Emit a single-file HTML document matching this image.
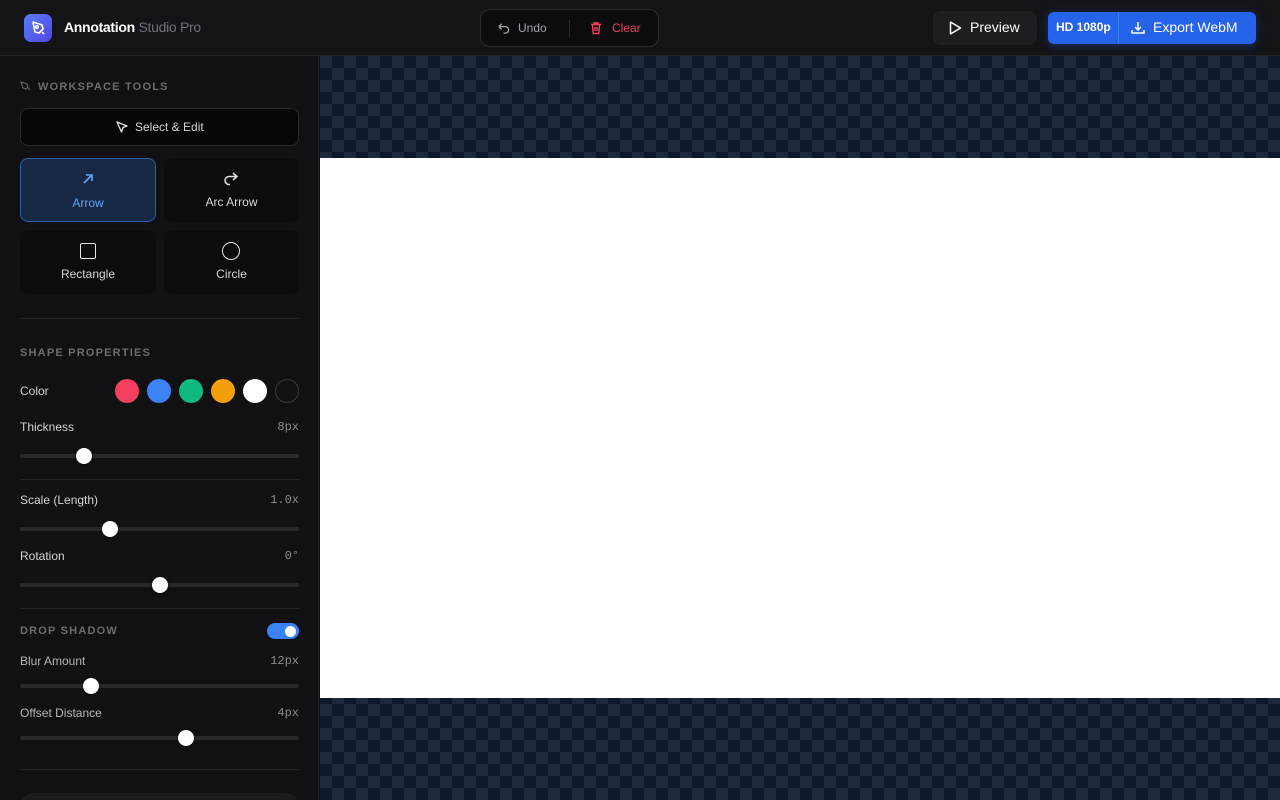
<!DOCTYPE html>
<html style="width:1280px;height:800px;overflow:hidden"><head><style>
*{box-sizing:border-box;margin:0;padding:0}
body{width:1280px;height:800px;overflow:hidden;background:#111113;font-family:"Liberation Sans",sans-serif;color:#e4e4e7;position:relative}
.hdr{position:absolute;left:0;top:0;width:1280px;height:56px;background:#141418;border-bottom:1px solid #242428}
.logo{position:absolute;left:24px;top:14px;width:28px;height:28px;border-radius:7px;background:linear-gradient(135deg,#5b7cf7,#4f46e5)}
.title{position:absolute;left:64px;top:19px;font-size:14px;font-weight:bold;color:#fff;letter-spacing:-0.3px}
.title span{font-weight:normal;color:#71717a}
.ctr{position:absolute;left:480px;top:9px;width:179px;height:38px;border:1px solid #2a2a2e;border-radius:10px;background:#0c0c0e}
.side{position:absolute;left:0;top:56px;width:319px;height:744px;background:#111113;border-right:1px solid #1f1f22;overflow:hidden}
.canvas{position:absolute;left:320px;top:56px;width:960px;height:744px;background-color:#0f172a;background-image:linear-gradient(45deg,#1e293b 25%,transparent 25%,transparent 75%,#1e293b 75%),linear-gradient(45deg,#1e293b 25%,transparent 25%,transparent 75%,#1e293b 75%);background-size:24px 24px;background-position:12px 0,0 12px}
.white{position:absolute;left:320px;top:158px;width:960px;height:540px;background:#fff}
.lbl{position:absolute;font-size:11px;font-weight:bold;letter-spacing:1.2px;color:#6b6b72}
.t{position:absolute;font-size:12px;color:#d4d4d8}
.v{position:absolute;font-family:"Liberation Mono",monospace;font-size:12px;color:#8a8a90;right:981px}
.tr{position:absolute;left:20px;width:279px;height:4px;border-radius:2px;background:#2a2a2e}
.th{position:absolute;width:16px;height:16px;border-radius:50%;background:#fff;top:-6px;margin-left:-8px;box-shadow:0 1px 3px rgba(0,0,0,.5)}
.hr{position:absolute;left:20px;width:279px;height:1px;background:#232326}
.btn{position:absolute;border-radius:8px;background:#0c0c0e;text-align:center;font-size:12px;color:#d4d4d8}
.sw{position:absolute;top:379px;width:24px;height:24px;border-radius:50%}
</style></head><body>
<div class="hdr">
 <div class="logo"><svg width="28" height="28" viewBox="0 0 28 28" fill="none" stroke="#fff" stroke-width="1.6" stroke-linejoin="round"><path d="M9 8l9 3 1 4-4 4-4-1z"/><path d="M18 18l2 2"/><circle cx="13" cy="13" r="1.3"/></svg></div>
 <div class="title">Annotation <span>Studio Pro</span></div>
 <div class="ctr">
  <svg style="position:absolute;left:16px;top:12px" width="13" height="13" viewBox="0 0 14 14" fill="none" stroke="#a1a1aa" stroke-width="1.4"><path d="M2 5h7a3.5 3.5 0 010 7H7M2 5l3-3M2 5l3 3"/></svg>
  <span style="position:absolute;left:37px;top:11px;font-size:12px;color:#a1a1aa">Undo</span>
  <div style="position:absolute;left:88px;top:10px;width:1px;height:17px;background:#2a2a2e"></div>
  <svg style="position:absolute;left:108px;top:11px" width="14" height="14" viewBox="0 0 14 14" fill="none" stroke="#f43f5e" stroke-width="1.4"><path d="M2 3.5h10M5 3.5V2h4v1.5M3.5 3.5l.7 9h5.6l.7-9M6 6v4M8 6v4"/></svg>
  <span style="position:absolute;left:131px;top:11px;font-size:12px;color:#f43f5e">Clear</span>
 </div>
 <div style="position:absolute;left:933px;top:11px;width:104px;height:34px;border-radius:8px;background:#1e1e21">
  <svg style="position:absolute;left:14px;top:9px" width="16" height="16" viewBox="0 0 16 16" fill="none" stroke="#fff" stroke-width="1.5" stroke-linejoin="round"><path d="M3.5 2l10 6-10 6z"/></svg>
  <span style="position:absolute;left:37px;top:8px;font-size:14px;color:#fff">Preview</span>
 </div>
 <div style="position:absolute;left:1048px;top:12px;width:208px;height:32px;border-radius:6px;background:#2563eb;box-shadow:0 2px 10px rgba(37,99,235,.35)">
  <span style="position:absolute;left:8px;top:8px;font-size:12px;font-weight:bold;color:#fff">HD 1080p</span>
  <div style="position:absolute;left:70px;top:0;width:1px;height:32px;background:#3b82f6"></div>
  <svg style="position:absolute;left:82px;top:8px" width="16" height="16" viewBox="0 0 16 16" fill="none" stroke="#fff" stroke-width="1.5"><path d="M8 2v8M5 7l3 3 3-3M2 10v3h12v-3"/></svg>
  <span style="position:absolute;left:105px;top:7px;font-size:14px;color:#fff">Export WebM</span>
 </div>
</div>
<div class="side">
 <svg style="position:absolute;left:20px;top:24px" width="12" height="12" viewBox="0 0 12 12" fill="none" stroke="#6b6b72" stroke-width="1.1"><path d="M1 2l6 2 1 3-2 2-3-1z"/><path d="M8 8l2 2"/></svg>
 <div class="lbl" style="left:38px;top:25px">WORKSPACE TOOLS</div>
 <div class="btn" style="left:20px;top:52px;width:279px;height:38px;border:1px solid #2a2a2e;background:#060607">
  <svg style="position:absolute;left:94px;top:11px" width="14" height="14" viewBox="0 0 14 14" fill="none" stroke="#e4e4e7" stroke-width="1.3" stroke-linejoin="round"><path d="M2 2l10 4-4 1.5L6.5 12z"/></svg>
  <span style="position:absolute;left:114px;top:11px">Select &amp; Edit</span></div>
 <div class="btn" style="left:20px;top:102px;width:136px;height:64px;background:#172844;border:1px solid #2f5ea8;color:#60a5fa">
  <svg style="position:absolute;left:60px;top:13px" width="14" height="14" viewBox="0 0 14 14" fill="none" stroke="#60a5fa" stroke-width="1.6"><path d="M3 11L11 3M5 3h6v6"/></svg>
  <span style="position:absolute;left:0;right:0;top:37px">Arrow</span></div>
 <div class="btn" style="left:164px;top:102px;width:135px;height:64px">
  <svg style="position:absolute;left:58px;top:12px" width="18" height="18" viewBox="0 0 18 18" fill="none" stroke="#e4e4e7" stroke-width="1.5"><path d="M11 3l4 3.5-4 3.5M15 6.5H7a4 4 0 000 8h1"/></svg>
  <span style="position:absolute;left:0;right:0;top:37px">Arc Arrow</span></div>
 <div class="btn" style="left:20px;top:174px;width:136px;height:64px">
  <div style="position:absolute;left:60px;top:13px;width:16px;height:16px;border:1.5px solid #e4e4e7;border-radius:2px"></div>
  <span style="position:absolute;left:0;right:0;top:37px">Rectangle</span></div>
 <div class="btn" style="left:164px;top:174px;width:135px;height:64px">
  <div style="position:absolute;left:58px;top:12px;width:18px;height:18px;border:1.5px solid #e4e4e7;border-radius:50%"></div>
  <span style="position:absolute;left:0;right:0;top:37px">Circle</span></div>
 <div class="hr" style="top:262px"></div>
 <div class="lbl" style="left:20px;top:291px">SHAPE PROPERTIES</div>
 <div style="position:absolute;left:20px;top:737px;width:279px;height:30px;border-radius:14px;background:#1c1c1f"></div>
</div>
<div class="canvas"></div>
<div class="white"></div>
<div class="t" style="left:20px;top:384px">Color</div>
<div class="sw" style="left:115px;background:#f43f5e"></div>
<div class="sw" style="left:147px;background:#3b82f6"></div>
<div class="sw" style="left:179px;background:#10b981"></div>
<div class="sw" style="left:211px;background:#f59e0b"></div>
<div class="sw" style="left:243px;background:#fff"></div>
<div class="sw" style="left:275px;background:#111113;border:1px solid #3a3a3e"></div>
<div class="t" style="left:20px;top:420px">Thickness</div><div class="v" style="top:420px">8px</div>
<div class="tr" style="top:454px"><div class="th" style="left:64px"></div></div>
<div class="hr" style="top:479px"></div>
<div class="t" style="left:20px;top:493px">Scale (Length)</div><div class="v" style="top:493px">1.0x</div>
<div class="tr" style="top:527px"><div class="th" style="left:90px"></div></div>
<div class="t" style="left:20px;top:549px">Rotation</div><div class="v" style="top:549px">0°</div>
<div class="tr" style="top:583px"><div class="th" style="left:140px"></div></div>
<div class="hr" style="top:608px"></div>
<div class="lbl" style="left:20px;top:625px">DROP SHADOW</div>
<div style="position:absolute;left:267px;top:623px;width:32px;height:16px;border-radius:8px;background:#3b82f6"><div style="position:absolute;right:3px;top:3px;width:11px;height:11px;border-radius:50%;background:#fff"></div></div>
<div class="t" style="left:20px;top:654px;color:#b4b4ba">Blur Amount</div><div class="v" style="top:654px">12px</div>
<div class="tr" style="top:684px"><div class="th" style="left:71px"></div></div>
<div class="t" style="left:20px;top:706px;color:#b4b4ba">Offset Distance</div><div class="v" style="top:706px">4px</div>
<div class="tr" style="top:736px"><div class="th" style="left:166px"></div></div>
<div class="hr" style="top:769px"></div>
</body></html>
